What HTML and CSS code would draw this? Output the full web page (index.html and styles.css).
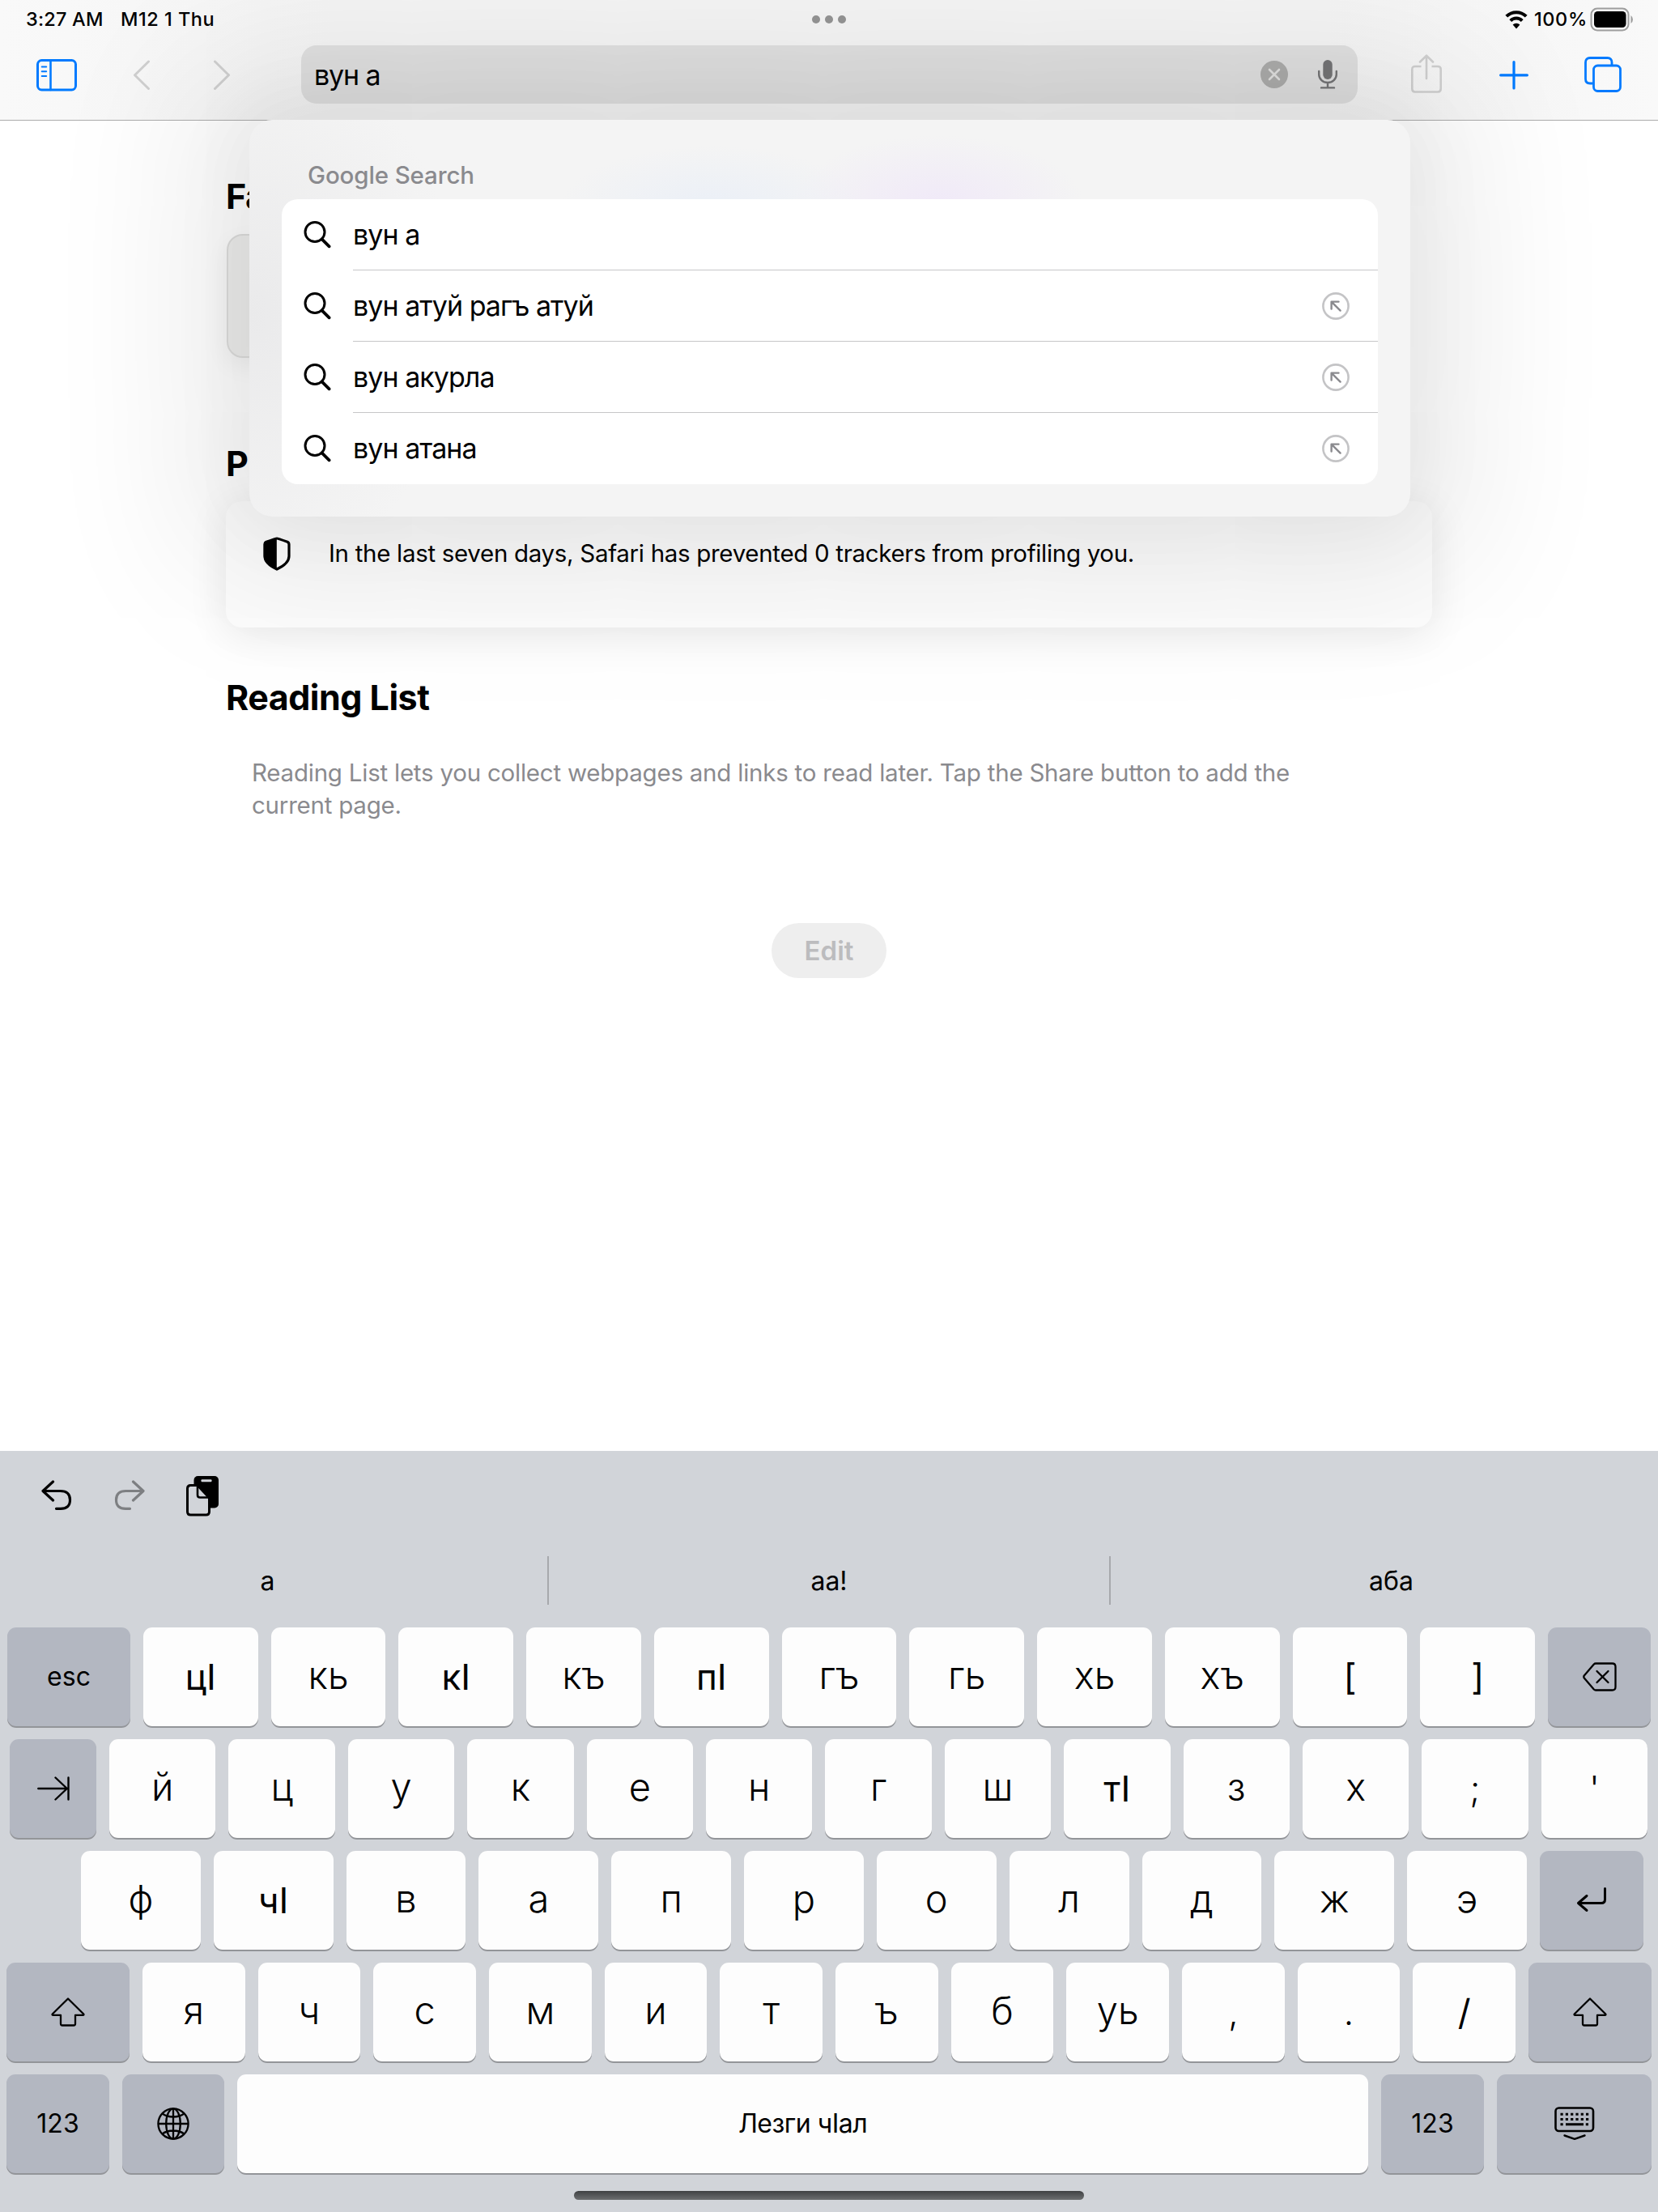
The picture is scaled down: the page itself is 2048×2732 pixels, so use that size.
FILE: index.html
```
<!DOCTYPE html>
<html lang="en">
<head>
<meta charset="utf-8">
<title>Safari</title>
<link rel="stylesheet" href="styles.css">
</head>
<body>
<svg class="defs" width="0" height="0">
  <symbol id="search" viewBox="0 0 34 34"><g fill="none" stroke="#000" stroke-width="3" stroke-linecap="round"><circle cx="14" cy="13.5" r="12"/><path d="M22.6 22.3 31.6 31.3" stroke-width="3.8"/></g></symbol>
  <symbol id="fill" viewBox="0 0 34 34"><circle cx="17" cy="17" r="15.6" fill="none" stroke="#c4c4c6" stroke-width="2.6"/><path d="M22.6 22.6 11.8 11.8M11.6 20.5V11.6H20.5" fill="none" stroke="#8a8a8e" stroke-width="2.4" stroke-linecap="round" stroke-linejoin="round"/></symbol>
  <symbol id="shift" viewBox="0 0 42 36"><path d="M21 1.5 2 20.3Q.8 21.9 2.8 21.9H12V32.5Q12 34.5 14 34.5H28Q30 34.5 30 32.5V21.9H39.2Q41.2 21.9 40 20.3Z" fill="none" stroke="#000" stroke-width="2.3" stroke-linejoin="round"/></symbol>
</svg>
<div class="screen">
  <header class="chrome">
    <div class="status">
      <span class="time">3:27 AM</span><span class="date">M12 1 Thu</span>
      <div class="dots"><i></i><i></i><i></i></div>
      <svg class="wifi" width="28" height="26" viewBox="0 0 28 26"><g fill="none" stroke="#000" stroke-width="4"><path d="M1.8 9.2a17.3 17.3 0 0 1 24.4 0"/><path d="M6.8 14.6a10.2 10.2 0 0 1 14.4 0"/></g><path d="M14 24.5 9.6 19.6a6.4 6.4 0 0 1 8.8 0Z"/></svg>
      <span class="pct">100%</span>
      <svg class="battery" width="54" height="30" viewBox="0 0 54 30"><rect x="2.5" y="1.5" width="46" height="27" rx="7.5" fill="none" stroke="#9d9d9d" stroke-width="2"/><rect x="6" y="5" width="39.5" height="20" rx="4.5"/><path d="M51.5 10q2.5 2 2.5 5t-2.5 5Z" fill="#9d9d9d"/></svg>
    </div>
    <div class="toolbar">
      <svg class="i-side" width="50" height="40" viewBox="0 0 50 40"><g fill="none" stroke="#007aff" stroke-linecap="round"><rect x="1.5" y="1.5" width="47" height="36.5" rx="5" stroke-width="3"/><path d="M17.5 1.5V38" stroke-width="2.6"/><path d="M6.7 9.5h5.5M6.7 15.2h5.5M6.7 20.9h5.5" stroke-width="2"/></g></svg>
      <svg class="i-back" width="22" height="38" viewBox="0 0 22 38"><path d="M19.5 2 2.5 18.8 19.5 35.5" fill="none" stroke="#cfcfcf" stroke-width="3" stroke-linecap="round" stroke-linejoin="round"/></svg>
      <svg class="i-fwd" width="22" height="38" viewBox="0 0 22 38"><path d="M2.5 2 19.5 18.8 2.5 35.5" fill="none" stroke="#cfcfcf" stroke-width="3" stroke-linecap="round" stroke-linejoin="round"/></svg>
      <div class="address">
        <span class="query">вун а</span>
        <svg width="34" height="34" viewBox="0 0 34 34"><circle cx="17" cy="17" r="17" fill="#acacab"/><path d="M11 11 23 23M23 11 11 23" stroke="#e0e0df" stroke-width="2.6" stroke-linecap="round"/></svg>
        <svg class="mic" width="24" height="36" viewBox="0 0 24 36"><rect x="6.3" y="0" width="11.4" height="24" rx="5.7" fill="#747476"/><path d="M1.2 14v4a10.8 10 0 0 0 21.6 0V14M12 28v6M4 34.4H20" fill="none" stroke="#747476" stroke-width="2.4" stroke-linecap="round"/></svg>
      </div>
      <svg class="i-share" width="38" height="48" viewBox="0 0 38 48"><g fill="none" stroke="#cfcfcf" stroke-width="2.6" stroke-linecap="round" stroke-linejoin="round"><path d="M12.5 15H5Q1.3 15 1.3 18.7V42.8Q1.3 46.5 5 46.5H33Q36.7 46.5 36.7 42.8V18.7Q36.7 15 33 15H25.5" stroke-linecap="butt"/><path d="M19 30V2M11 9.5 19 1.7 27 9.5"/></g></svg>
      <svg class="i-plus" width="36" height="36" viewBox="0 0 36 36"><path d="M18 1.6V34M1.6 17.8H34.4" stroke="#007aff" stroke-width="3.2" stroke-linecap="round"/></svg>
      <svg class="i-tabs" width="46" height="44" viewBox="0 0 46 44"><g fill="none" stroke="#007aff" stroke-width="2.8"><path d="M34 10.5V7Q34 1.5 28.5 1.5H7Q1.5 1.5 1.5 7V27.5Q1.5 33 7 33H10.5"/><rect x="11.5" y="11" width="33" height="31.5" rx="5"/></g></svg>
    </div>
  </header>

  <main class="start">
    <h2 class="favs">Fa</h2>
    <div class="tile"></div>
    <h2 class="priv">P</h2>
    <section class="card">
      <svg width="34" height="42" viewBox="0 0 34 42"><path d="M17 2Q18 2 30 6.2Q32 7 32 9.5V24Q32 33 17 40Q2 33 2 24V9.5Q2 7 4 6.2Q16 2 17 2Z" fill="#fff" stroke="#000" stroke-width="3.2"/><path d="M16.8 1.2V40.5Q.8 34 .8 24V9Q.8 6.5 3 5.7Q14 1.6 16.8 1.2Z"/></svg>
      <p>In the last seven days, Safari has prevented 0 trackers from profiling you.</p>
    </section>
    <h2 class="reading">Reading List</h2>
    <p class="hint">Reading List lets you collect webpages and links to read later. Tap the Share button to add the<br>current page.</p>
    <button class="edit">Edit</button>
  </main>

  <aside class="suggest">
    <h3>Google Search</h3>
    <ul>
      <li><svg width="34" height="34"><use href="#search"/></svg><span>вун а</span></li>
      <li><svg width="34" height="34"><use href="#search"/></svg><span>вун атуй рагъ атуй</span><svg width="34" height="34"><use href="#fill"/></svg></li>
      <li><svg width="34" height="34"><use href="#search"/></svg><span>вун акурла</span><svg width="34" height="34"><use href="#fill"/></svg></li>
      <li><svg width="34" height="34"><use href="#search"/></svg><span>вун атана</span><svg width="34" height="34"><use href="#fill"/></svg></li>
    </ul>
  </aside>

  <section class="keyboard">
    <div class="tools">
      <svg width="38" height="38" viewBox="0 0 38 38"><path d="M14.5 2 2 13.5 14.5 25M3 13.5H23.5Q35.5 13.5 35.5 24.5T23.5 35.3H18.5" fill="none" stroke="#000" stroke-width="3.2" stroke-linecap="round" stroke-linejoin="round"/></svg>
      <svg width="38" height="38" viewBox="0 0 38 38"><path d="M23.5 2 36 13.5 23.5 25M35 13.5H14.5Q2.5 13.5 2.5 24.5T14.5 35.3H19.5" fill="none" stroke="#7d7f82" stroke-width="3.2" stroke-linecap="round" stroke-linejoin="round"/></svg>
      <svg width="42" height="50" viewBox="0 0 42 50"><rect x="9.5" y="0" width="30.5" height="39.5" rx="5"/><rect x="18.5" y="4.3" width="13" height="3" rx="1" fill="#d1d4d9"/><path d="M1.5 15.5Q1.5 11.5 5.5 11.5H14L28.5 27V44Q28.5 48 24.5 48H5.5Q1.5 48 1.5 44Z" fill="#d1d4d9" stroke="#000" stroke-width="3"/><path d="M14 12V23.5Q14 26.5 17 26.5H28" fill="none" stroke="#000" stroke-width="2.6"/></svg>
    </div>
    <div class="predict"><span>а</span><span>аа!</span><span>аба</span></div>
    <div class="row r1">
      <kbd class="fn w152">esc</kbd><kbd class="duo">цӀ</kbd><kbd>кь</kbd><kbd class="duo">кӀ</kbd><kbd>къ</kbd><kbd class="duo">пӀ</kbd><kbd>гъ</kbd><kbd>гь</kbd><kbd>хь</kbd><kbd>хъ</kbd><kbd class="duo">[</kbd><kbd class="duo">]</kbd>
      <kbd class="fn w127"><svg width="42" height="36" viewBox="0 0 42 36"><g fill="none" stroke="#000" stroke-width="2.3" stroke-linecap="round" stroke-linejoin="round"><path d="M16 1.5H36.5Q40.5 1.5 40.5 5.5V30.5Q40.5 34.5 36.5 34.5H16Q14.8 34.5 13.8 33.5L1.8 19.5Q.8 18 1.8 16.5L13.8 2.5Q14.8 1.5 16 1.5Z"/><path d="M17.5 11 31.5 25M31.5 11 17.5 25"/></g></svg></kbd>
    </div>
    <div class="row r2">
      <kbd class="fn w107"><svg width="40" height="30" viewBox="0 0 40 30"><path d="M1.3 15H36.5M22.5 1.5 36.8 15 22.5 28.5M38.5 1.5V28.5" fill="none" stroke="#000" stroke-width="2.4" stroke-linecap="round" stroke-linejoin="round"/></svg></kbd><kbd>й</kbd><kbd>ц</kbd><kbd>у</kbd><kbd>к</kbd><kbd>е</kbd><kbd>н</kbd><kbd>г</kbd><kbd>ш</kbd><kbd class="duo">тӀ</kbd><kbd>з</kbd><kbd>х</kbd><kbd class="sym">;</kbd><kbd class="sym">'</kbd>
    </div>
    <div class="row r3">
      <kbd>ф</kbd><kbd class="duo">чӀ</kbd><kbd>в</kbd><kbd>а</kbd><kbd>п</kbd><kbd>р</kbd><kbd>о</kbd><kbd>л</kbd><kbd>д</kbd><kbd>ж</kbd><kbd>э</kbd>
      <kbd class="fn w128"><svg width="38" height="32" viewBox="0 0 38 32"><path d="M35.5 1.5V15Q35.5 19.5 31 19.5H2.5M13 10.5 2.5 19.5 13 28.5" fill="none" stroke="#000" stroke-width="3" stroke-linecap="round" stroke-linejoin="round"/></svg></kbd>
    </div>
    <div class="row r4">
      <kbd class="fn w152"><svg width="42" height="36"><use href="#shift"/></svg></kbd><kbd>я</kbd><kbd>ч</kbd><kbd>с</kbd><kbd>м</kbd><kbd>и</kbd><kbd>т</kbd><kbd>ъ</kbd><kbd>б</kbd><kbd>уь</kbd><kbd class="sym">,</kbd><kbd class="sym">.</kbd><kbd class="duo">/</kbd><kbd class="fn w152"><svg width="42" height="36"><use href="#shift"/></svg></kbd>
    </div>
    <div class="row r5">
      <kbd class="fn w127">123</kbd><kbd class="fn w126"><svg width="40" height="40" viewBox="0 0 40 40"><g fill="none" stroke="#000" stroke-width="2.3"><circle cx="20" cy="20" r="18.6"/><ellipse cx="20" cy="20" rx="8.8" ry="18.6"/><path d="M20 1.4V38.6M1.4 20H38.6M6.5 7.5Q12 11.5 20 11.5T33.5 7.5M6.5 32.5Q12 28.5 20 28.5T33.5 32.5"/></g></svg></kbd><kbd class="space">Лезги чӀал</kbd><kbd class="fn w127">123</kbd><kbd class="fn w191"><svg width="50" height="42" viewBox="0 0 50 42"><rect x="1.5" y="1.5" width="46.5" height="28.5" rx="4" fill="none" stroke="#000" stroke-width="2.6"/><path d="M7.5 9.3H43M7.5 15.5H43" stroke="#000" stroke-width="3" stroke-dasharray="3.2 3.1" fill="none"/><path d="M7.5 21.8h3.2M14 21.8H36M38.8 21.8h3.2" stroke="#000" stroke-width="3"/><path d="M12.5 35.5 25 39.8 37.5 35.5" fill="none" stroke="#000" stroke-width="2.4" stroke-linecap="round" stroke-linejoin="round"/></svg></kbd>
    </div>
    <div class="home"></div>
  </section>
</div>
</body>
</html>
```
FILE: styles.css
```
* { box-sizing: border-box; }
body { margin: 0; background: #fff; font-family: Inter, "Noto Sans", sans-serif; color: #000; }
h2, h3, p, ul { margin: 0; padding: 0; }
svg { display: block; flex: none; }
.defs { position: absolute; }
.screen { position: relative; width: 2048px; height: 2732px; display: flex; flex-direction: column; overflow: hidden; }

/* status bar and toolbar */
.chrome { height: 149px; background: linear-gradient(90deg, #f9f9f9, #f4f4f4 20%, #f4f4f4 80%, #f9f9f9); border-bottom: 1px solid #acacac; }
.status { position: relative; height: 47px; display: flex; align-items: center; padding: 0 31px 0 32px; font-size: 23.5px; font-weight: 500; line-height: 47px; white-space: nowrap; }
.time { width: 117px; letter-spacing: 0.2px; }
.date { letter-spacing: 0.5px; }
.dots { position: absolute; left: 1003px; top: 19px; display: flex; gap: 6px; }
.dots i { width: 10px; height: 10px; border-radius: 50%; background: #939393; }
.wifi { margin-left: auto; }
.pct { margin: 0 2px 0 8px; width: 66px; letter-spacing: 0.6px; }
.toolbar { display: flex; padding-left: 45px; }
.i-side { margin-top: 26px; }
.i-back { margin: 27px 0 0 69px; }
.i-fwd { margin: 27px 0 0 77px; }
.address { margin: 9px 0 0 87px; width: 1305px; height: 72px; border-radius: 19px; background: #dfdfdf; display: flex; align-items: center; padding: 0 25px 0 16px; }
.query { flex: 1; font-size: 34px; line-height: 73px; letter-spacing: -1.1px; }
.mic { margin-left: 37px; }
.i-share { margin: 20px 0 0 66px; }
.i-plus { margin: 28px 0 0 71px; }
.i-tabs { margin: 23px 0 0 69px; }

/* start page */
.start { flex: 1; padding-left: 279px; }
h2 { font-size: 43px; line-height: 52px; font-weight: 700; letter-spacing: -0.5px; }
.favs { margin-top: 67px; }
.tile { margin: 21px 0 0 1px; width: 160px; height: 153px; border-radius: 20px; background: #eeeeed; border: 2px solid #dededd; box-shadow: 0 10px 30px rgba(0,0,0,.06); }
.priv { margin-top: 104px; }
.card { margin-top: 21px; width: 1490px; height: 156px; border-radius: 20px; background: #fdfdfd; box-shadow: 0 8px 50px rgba(0,0,0,.09); display: flex; padding: 44px 0 0 46px; }
.card p { margin-left: 47px; font-size: 29.5px; line-height: 40px; letter-spacing: -0.31px; }
.reading { margin-top: 60px; }
.hint { margin: 47px 0 0 32px; font-size: 29.5px; line-height: 40px; letter-spacing: -0.23px; color: #8a8a8e; }
.edit { display: block; margin: 126px 0 0 674px; width: 142px; height: 68px; border: 0; border-radius: 34px; background: #eee; color: #bcbcbe; font: 600 33px/68px Inter, sans-serif; padding: 0; }

/* search suggestions, floating over the start page */
.suggest { position: absolute; left: 308px; top: 148px; width: 1434px; height: 490px; padding: 50px 40px 0; border-radius: 28px; background: radial-gradient(ellipse 190px 80px at 572px 112px, #eaeff7, rgba(244,244,244,0)), radial-gradient(ellipse 180px 85px at 850px 104px, #f0e9f8, rgba(244,244,244,0)), radial-gradient(ellipse 260px 330px at 0 240px, #eaeaeb, rgba(244,244,244,0)), #f4f4f4; box-shadow: 0 4px 180px 80px rgba(10,10,0,.078), 0 0 100px 15px rgba(10,10,0,.042); }
h3 { font-size: 29.5px; line-height: 36px; font-weight: 500; color: #8a8a8e; padding-left: 32px; letter-spacing: -0.13px; }
.suggest ul { margin-top: 12px; list-style: none; background: #fff; border-radius: 20px; height: 352px; }
.suggest li { height: 88px; display: flex; align-items: center; padding: 0 35px 0 27px; background: linear-gradient(#c6c6c8, #c6c6c8) 88px 87px / 1266px 1px no-repeat; }
.suggest li:last-child { background: none; }
.suggest li span { flex: 1; margin-left: 27px; font-size: 34px; line-height: 88px; letter-spacing: -0.95px; }

/* keyboard */
.keyboard { height: 940px; background: #d1d4d9; }
.tools { height: 130px; padding: 36px 0 0 51px; display: flex; gap: 52px; }
.tools svg:last-child { margin: -5px 0 0 -1px; }
.predict { height: 60px; display: flex; }
.predict span { flex: 1; text-align: center; font-size: 32px; line-height: 61px; }
.predict span:nth-child(1) { flex: 0 0 678px; border-right: 2px solid #a7a9ad; padding-right: 15px; }
.predict span:nth-child(2) { flex: 0 0 694px; border-right: 2px solid #a7a9ad; }
.predict span:nth-child(3) { padding-left: 17px; }
.row { display: flex; gap: 16px; height: 122px; margin-bottom: 16px; }
.r1 { margin-top: 28px; padding: 0 9px; }
.r2 { padding: 0 13px 0 12px; }
.r3 { padding: 0 18px 0 100px; }
.r4, .r5 { padding: 0 8px; }
kbd { flex: 1 1 0; min-width: 0; height: 122px; border-radius: 11px; background: #fdfdfd; box-shadow: 0 2px 0 #939599; display: flex; justify-content: center; align-items: center; font: 300 47px/122px Inter, sans-serif; white-space: nowrap; padding-bottom: 4px; }
.duo { font-size: 44px; font-weight: 400; padding-bottom: 0; }
.sym { font-size: 44px; font-weight: 300; padding-bottom: 0; }
.fn { flex: none; background: #b3b7c1; font-size: 32px; font-weight: 400; padding-bottom: 0; }
.w107 { width: 107px; }
.w126 { width: 126px; }
.w127 { width: 127px; }
.w128 { width: 128px; }
.w152 { width: 152px; }
.w191 { width: 191px; }
.space { font-size: 32px; font-weight: 400; padding-bottom: 0; letter-spacing: -0.5px; }
.r5 { margin-bottom: 0; }
.home { margin: 22px 0 0 709px; width: 630px; height: 11px; border-radius: 6px; background: linear-gradient(#3f4143, #6c6e70); }
```
